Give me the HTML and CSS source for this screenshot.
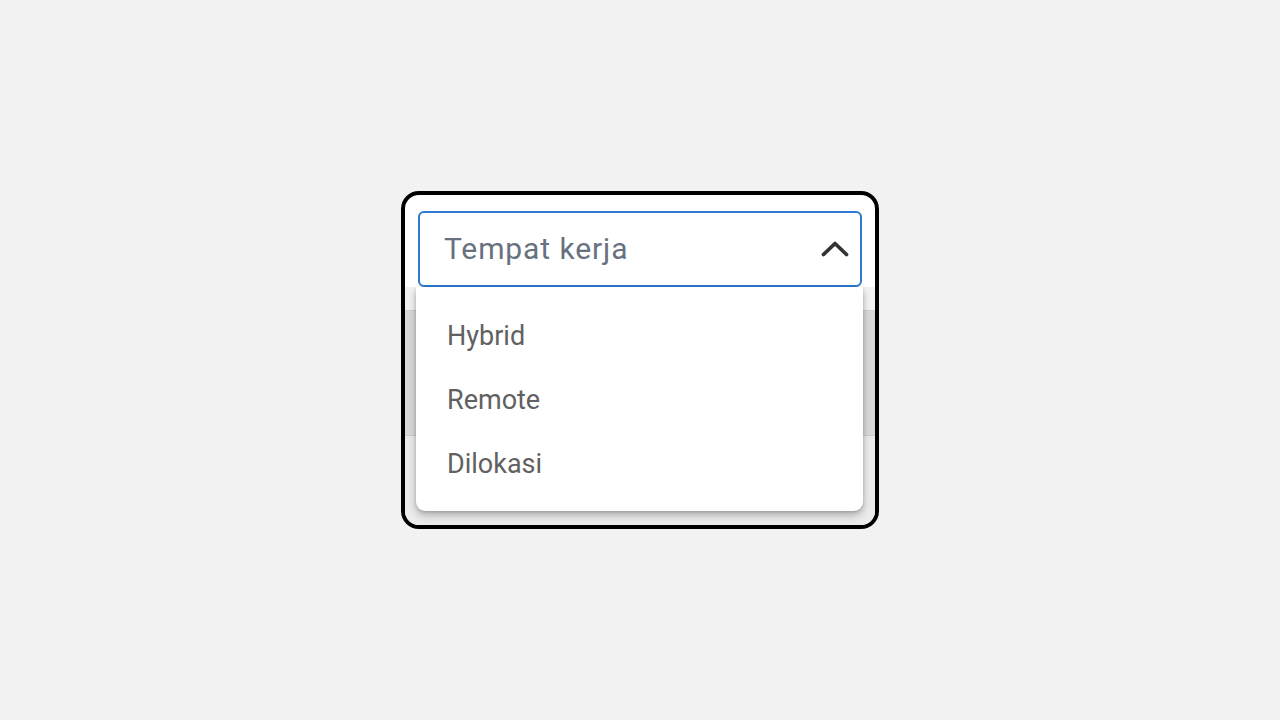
FILE: index.html
```html
<!DOCTYPE html>
<html lang="id">
<head>
<meta charset="utf-8">
<title>Tempat kerja</title>
<link rel="stylesheet" href="styles.css">
</head>
<body>
<div class="stage">
  <div class="frame">
    <div class="select">
      <span class="placeholder">Tempat kerja</span>
      <svg class="chevron" width="28" height="16" viewBox="0 0 28 16" aria-hidden="true">
        <path d="M2.5 13.5 L14 2.5 L25.5 13.5" fill="none" stroke="#333" stroke-width="3.8" stroke-linecap="round" stroke-linejoin="round"/>
      </svg>
    </div>
    <div class="under">
      <div class="under-top"></div>
      <div class="under-band"></div>
      <div class="under-bottom"></div>
      <ul class="menu">
        <li class="option">Hybrid</li>
        <li class="option">Remote</li>
        <li class="option">Dilokasi</li>
      </ul>
    </div>
  </div>
</div>
</body>
</html>
```

FILE: styles.css
```css
* { box-sizing: border-box; }
html, body { margin: 0; padding: 0; }
body {
  background: #f2f2f2;
  font-family: Roboto, "Liberation Sans", Arial, sans-serif;
  width: 1280px;
  height: 720px;
  overflow: hidden;
}
.stage {
  width: 1280px;
  height: 720px;
  display: flex;
  align-items: center;
  justify-content: center;
}
.frame {
  width: 478px;
  height: 338px;
  border: 4px solid #000;
  border-radius: 18px;
  background: #fff;
  padding-top: 16px;
  display: flex;
  flex-direction: column;
  overflow: hidden;
}
.select {
  margin: 0 13px;
  height: 76px;
  border: 2px solid #2d79cf;
  border-radius: 6px;
  display: flex;
  align-items: center;
  justify-content: space-between;
  padding: 0 11px 0 24px;
  background: #fff;
  flex: none;
}
.placeholder {
  font-size: 30px;
  color: #687180;
  letter-spacing: 0.9px;
  margin-top: -2px;
}
.chevron { display: block; margin-top: 0; }
.under {
  position: relative;
  flex: 1;
  display: flex;
  flex-direction: column;
}
.under-top {
  height: 24px;
  background: #f3f3f3;
  border-bottom: 1px solid #d2d2d2;
}
.under-band {
  height: 125px;
  background: #dadada;
  border-bottom: 1px solid #cfcfcf;
}
.under-bottom {
  flex: 1;
  background: #ececec;
}
.menu {
  position: absolute;
  left: 11px;
  right: 12px;
  top: 0;
  height: 224px;
  margin: 0;
  padding: 17px 0 0;
  list-style: none;
  background: #fff;
  border-radius: 0 0 9px 9px;
  box-shadow: 0 4px 8px rgba(0,0,0,0.28), 0 1px 3px rgba(0,0,0,0.15);
}
.option {
  height: 64px;
  display: flex;
  align-items: center;
  padding-left: 31px;
  font-size: 27px;
  color: #616161;
}
```
